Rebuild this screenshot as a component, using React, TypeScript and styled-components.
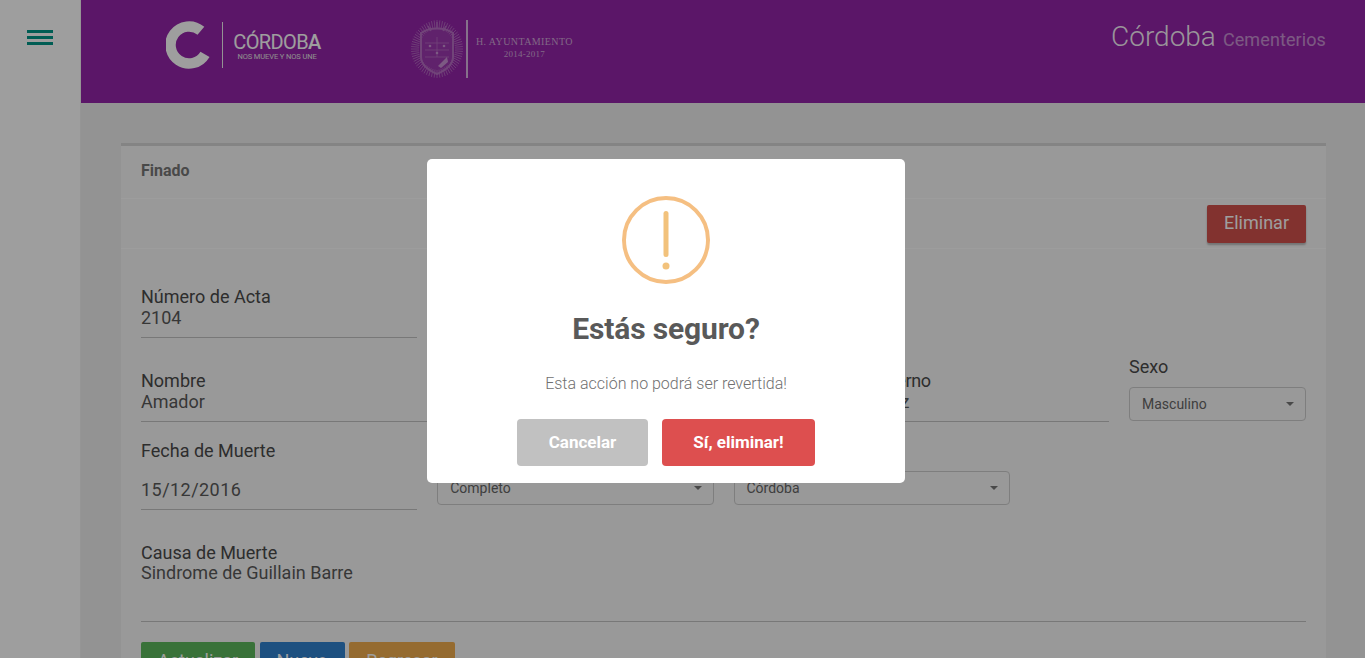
import React from "react";
import styled, { createGlobalStyle } from "styled-components";

const Global = createGlobalStyle`
  html, body { margin: 0; padding: 0; height: 100%; overflow: hidden; }
  body { font-family: Roboto, "Liberation Sans", sans-serif; background: #eee; }
  * { box-sizing: border-box; }
`;

const Page = styled.div`
  display: flex;
  height: 658px;
  overflow: hidden;
`;
const Sidebar = styled.aside`
  width: 81px;
  flex: none;
  background: #fff;
  border-right: 1px solid #f0f0f0;
  padding: 30px 0 0 27px;
`;
const MenuBars = styled.div`
  width: 26px;
  display: flex;
  flex-direction: column;
  gap: 3px;
`;
const MenuBar = styled.span`
  height: 3px;
  background: #009688;
`;
const Main = styled.main`
  flex: 1;
  min-width: 0;
`;
const Header = styled.header`
  height: 103px;
  background: #9425a8;
  display: flex;
  align-items: flex-start;
  padding: 0 39px 0 85px;
`;
const LogoCordoba = styled.div`
  display: flex;
  align-items: center;
  margin-top: 20px;
  height: 50px;
`;
const LogoDivider = styled.span`
  width: 1px;
  height: 46px;
  margin: 0 10px 0 11px;
  background: #eee;
`;
const LogoWords = styled.div`
  display: flex;
  flex-direction: column;
  align-items: center;
  color: #fff;
  width: 88px;
  margin-top: 3px;
`;
const LogoName = styled.span`
  font-size: 20px;
  font-weight: 400;
  line-height: 19px;
  letter-spacing: -0.6px;
  white-space: nowrap;
  strong { font-weight: 500; }
`;
const LogoTag = styled.span`
  font-size: 7.5px;
  line-height: 9px;
  white-space: nowrap;
  letter-spacing: -0.1px;
  color: #e6e6e6;
`;
const LogoAyto = styled.div`
  display: flex;
  align-items: center;
  margin: 19px 0 0 90px;
  height: 60px;
`;
const AytoDivider = styled.span`
  width: 2px;
  height: 58px;
  margin: 0 8px 0 3px;
  background: #d9b6e0;
`;
const AytoWords = styled.div`
  display: flex;
  flex-direction: column;
  align-items: center;
  font-family: "Liberation Serif", serif;
  color: #d0a8d8;
  margin-top: -2px;
`;
const AytoName = styled.span`
  font-size: 10px;
  line-height: 13px;
  letter-spacing: 0.4px;
  white-space: nowrap;
`;
const AytoYears = styled.span`
  font-size: 9px;
  line-height: 13px;
  letter-spacing: 0.25px;
`;
const Brand = styled.div`
  margin-left: auto;
  margin-top: 18px;
  font-weight: 300;
  white-space: nowrap;
  color: rgba(255, 255, 255, 0.95);
  font-size: 28px;
  line-height: 37px;
`;
const BrandSub = styled.small`
  font-size: 18px;
  font-weight: 400;
  margin-left: 7px;
  letter-spacing: 0.1px;
  color: rgba(255, 255, 255, 0.5);
`;
const Content = styled.section`
  padding: 40px 39px 0 40px;
`;
const Card = styled.div`
  background: #f7f7f7;
  border-top: 3px solid #d6d6d6;
`;
const CardTitle = styled.div`
  height: 53px;
  padding: 15px 20px 0;
  font-size: 16px;
  line-height: 20px;
  font-weight: 700;
  color: #777;
  border-bottom: 1px solid #fdfdfd;
`;
const CardTools = styled.div`
  height: 50px;
  padding-top: 6px;
  display: flex;
  justify-content: flex-end;
  padding-right: 20px;
  border-bottom: 1px solid #fdfdfd;
`;
const DangerButton = styled.button`
  width: 99px;
  height: 38px;
  border: 0;
  border-radius: 2px;
  background: #d2514c;
  color: #fff;
  font: 400 18px/36px Roboto, sans-serif;
  padding: 0 0 2px;
  box-shadow: 0 2px 2px rgba(0, 0, 0, 0.25);
`;
const CardBody = styled.div`
  padding: 37px 20px 0;
  display: flex;
  flex-direction: column;
`;
const FourGrid = styled.div<{ $top?: number }>`
  display: grid;
  grid-template-columns: repeat(4, 1fr);
  column-gap: 20px;
  margin-top: ${(p) => p.$top ?? 0}px;
`;
const NameRow = styled.div`
  display: flex;
  align-items: flex-end;
  gap: 20px;
  margin-top: 18px;
`;
const TextField = styled.div`
  flex: 1;
  min-width: 0;
  padding-bottom: 9px;
  border-bottom: 1px solid #c2c2c2;
`;
const Label = styled.div`
  font-size: 18px;
  line-height: 22px;
  color: #4a4a4a;
  white-space: nowrap;
`;
const TightLabel = styled(Label)`
  letter-spacing: -0.35px;
`;
const Value = styled.div`
  font-size: 18px;
  line-height: 20px;
  color: #5a5a5a;
  white-space: nowrap;
`;
const DateValue = styled.div`
  height: 48px;
  padding-top: 18px;
  font-size: 18px;
  line-height: 20px;
  letter-spacing: 0.45px;
  color: #5a5a5a;
  border-bottom: 1px solid #c2c2c2;
`;
const SexColumn = styled.div`
  width: 177px;
  flex: none;
  padding-bottom: 1px;
`;
const SelectBox = styled.div`
  margin-top: 9px;
  height: 34px;
  padding: 0 12px;
  border: 1px solid #ccc;
  border-radius: 4px;
  display: flex;
  align-items: center;
  justify-content: space-between;
  font-size: 14px;
  color: #666;
`;
const Caret = styled.span`
  width: 0;
  height: 0;
  border-left: 4px solid transparent;
  border-right: 4px solid transparent;
  border-top: 4px solid #777;
  margin-right: -1px;
`;
const CauseField = styled.div`
  margin-top: 33px;
  height: 79px;
  border-bottom: 1px solid #c2c2c2;
`;
const CauseLabel = styled(Label)`
  line-height: 20px;
`;
const Actions = styled.div`
  display: flex;
  gap: 4.5px;
  margin-top: 20px;
`;
const ActionButton = styled.button<{ $bg: string; $w: number }>`
  width: ${(p) => p.$w}px;
  height: 40px;
  border: 0;
  border-radius: 2px;
  padding: 0 0 2px;
  background: ${(p) => p.$bg};
  color: #fff;
  font: 400 18px/38px Roboto, sans-serif;
`;
const Overlay = styled.div`
  position: fixed;
  inset: 0;
  background: rgba(0, 0, 0, 0.38);
  display: flex;
  align-items: center;
  justify-content: center;
  padding: 0 33px 16px 0;
`;
const Modal = styled.div`
  width: 478px;
  height: 324px;
  background: #fff;
  border-radius: 5px;
  padding-top: 37px;
  display: flex;
  flex-direction: column;
  align-items: center;
`;
const WarnIcon = styled.svg`
  display: block;
  flex: none;
`;
const ModalTitle = styled.h2`
  margin: 27px 0 0;
  font-size: 30px;
  line-height: 36px;
  font-weight: 700;
  letter-spacing: -0.15px;
  color: #595959;
`;
const ModalText = styled.p`
  margin: 27px 0 0;
  font-size: 16px;
  line-height: 20px;
  font-weight: 300;
  color: #707070;
`;
const ModalActions = styled.div`
  display: flex;
  gap: 14px;
  margin-top: 25px;
`;
const ModalButton = styled.button<{ $bg: string; $w: number }>`
  width: ${(p) => p.$w}px;
  height: 47px;
  border: 0;
  border-radius: 4px;
  padding: 0;
  background: ${(p) => p.$bg};
  color: #fff;
  font: 700 17px/47px Roboto, sans-serif;
`;

const rays = Array.from({ length: 64 }, (_, i) => (i * 360) / 64);

const Crest = () => (
  <svg width="52" height="60" viewBox="0 0 52 60" fill="none" stroke="#d9b6e0" strokeWidth="0.8" opacity="0.5">
    {rays.map((a) => (
      <line key={a} x1="26" y1="9" x2="26" y2="1" transform={`rotate(${a} 26 30) translate(0 ${Math.abs(Math.sin((a * Math.PI) / 180)) * 3})`} />
    ))}
    <path d="M10 14c8-6 24-6 32 0v24c0 8-9 14-16 17-7-3-16-9-16-17z" strokeWidth="2" fill="#d9b6e0" fillOpacity="0.25" />
    <path d="M14 24h24M14 31h24M26 18v20M14 38h24" />
    <path d="M27 47l9-9 1 5-7 6z" fill="#fff" stroke="none" />
    <circle cx="19" cy="27" r="1.3" fill="#fff" stroke="none" />
    <circle cx="33" cy="27" r="1.3" fill="#fff" stroke="none" />
    <circle cx="26" cy="34" r="1.3" fill="#fff" stroke="none" />
    <path d="M17 7l3 5M26 3v7M35 7l-3 5" strokeWidth="1.4" />
  </svg>
);

export default function App() {
  return (
    <>
      <Global />
      <Page>
        <Sidebar>
          <MenuBars>
            <MenuBar />
            <MenuBar />
            <MenuBar />
          </MenuBars>
        </Sidebar>
        <Main>
          <Header>
            <LogoCordoba>
              <svg width="45" height="50" viewBox="0 0 45 50" fill="none">
                <path d="M34.9 10.8A18.5 18.5 0 1 0 39 34.3" stroke="#fff" strokeWidth="10.5" />
              </svg>
              <LogoDivider />
              <LogoWords>
                <LogoName>
                  CÓRDOB<strong>A</strong>
                </LogoName>
                <LogoTag>NOS MUEVE Y NOS UNE</LogoTag>
              </LogoWords>
            </LogoCordoba>
            <LogoAyto>
              <Crest />
              <AytoDivider />
              <AytoWords>
                <AytoName>H. AYUNTAMIENTO</AytoName>
                <AytoYears>2014-2017</AytoYears>
              </AytoWords>
            </LogoAyto>
            <Brand>
              Córdoba<BrandSub>Cementerios</BrandSub>
            </Brand>
          </Header>
          <Content>
            <Card>
              <CardTitle>Finado</CardTitle>
              <CardTools>
                <DangerButton>Eliminar</DangerButton>
              </CardTools>
              <CardBody>
                <FourGrid>
                  <TextField>
                    <Label>Número de Acta</Label>
                    <Value>2104</Value>
                  </TextField>
                </FourGrid>
                <NameRow>
                  <TextField>
                    <Label>Nombre</Label>
                    <Value>Amador</Value>
                  </TextField>
                  <TextField>
                    <Label>Apellido Paterno</Label>
                    <Value>Ruiz</Value>
                  </TextField>
                  <TextField>
                    <TightLabel>Apellido Materno</TightLabel>
                    <Value>Giménez Díaz</Value>
                  </TextField>
                  <SexColumn>
                    <Label>Sexo</Label>
                    <SelectBox>
                      Masculino
                      <Caret />
                    </SelectBox>
                  </SexColumn>
                </NameRow>
                <FourGrid $top={18}>
                  <div>
                    <Label>Fecha de Muerte</Label>
                    <DateValue>15/12/2016</DateValue>
                  </div>
                  <div>
                    <Label>Estado</Label>
                    <SelectBox>
                      Completo
                      <Caret />
                    </SelectBox>
                  </div>
                  <div>
                    <Label>Municipio</Label>
                    <SelectBox>
                      Córdoba
                      <Caret />
                    </SelectBox>
                  </div>
                </FourGrid>
                <CauseField>
                  <CauseLabel>Causa de Muerte</CauseLabel>
                  <Value>Sindrome de Guillain Barre</Value>
                </CauseField>
                <Actions>
                  <ActionButton $bg="#5cb85c" $w={114}>Actualizar</ActionButton>
                  <ActionButton $bg="#2f81cf" $w={85}>Nuevo</ActionButton>
                  <ActionButton $bg="#f0ad4e" $w={106}>Regresar</ActionButton>
                </Actions>
              </CardBody>
            </Card>
          </Content>
        </Main>
      </Page>
      <Overlay>
        <Modal>
          <WarnIcon width="88" height="88" viewBox="0 0 88 88" fill="none">
            <circle cx="44" cy="44" r="42" stroke="#f5bf82" strokeWidth="4" />
            <rect x="41.5" y="15" width="5" height="46" rx="2.5" fill="#f2c27c" />
            <circle cx="44" cy="70" r="3.5" fill="#f2c27c" />
          </WarnIcon>
          <ModalTitle>Estás seguro?</ModalTitle>
          <ModalText>Esta acción no podrá ser revertida!</ModalText>
          <ModalActions>
            <ModalButton $bg="#c1c1c1" $w={131}>Cancelar</ModalButton>
            <ModalButton $bg="#dd4f4f" $w={153}>Sí, eliminar!</ModalButton>
          </ModalActions>
        </Modal>
      </Overlay>
    </>
  );
}
